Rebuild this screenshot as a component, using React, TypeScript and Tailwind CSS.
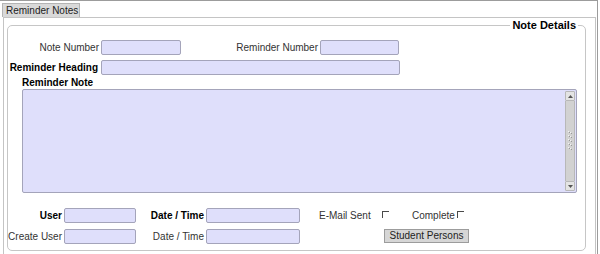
const inputCls = "h-[15px] shrink-0 rounded-[2px] border border-[#a4a4ba] bg-[#dfdffb]";

function Check() {
  return <span className="ml-0 mt-[1px] block h-[7px] w-[7px] border-l border-t border-[#4a4a4a]" />;
}

function ScrollBar() {
  return (
    <div className="my-[1px] mr-[1px] flex w-[10px] flex-col">
      <div className="flex h-[10px] items-center justify-center rounded-[1px] border border-[#b8b8b8] bg-[#e4e4e4]">
        <svg width="5" height="3" viewBox="0 0 5 3">
          <path d="M0 3 L2.5 0 L5 3 Z" fill="#555" />
        </svg>
      </div>
      <div className="flex flex-1 items-center justify-center border-x border-[#b8b8b8] bg-[#d2d2d2]">
        <svg width="6" height="22" viewBox="0 0 6 22">
          {[0, 4, 8, 12, 16].map((y) => (
            <g key={y}>
              <rect x="1" y={y + 1} width="1" height="1" fill="#f4f4f4" />
              <rect x="3" y={y + 2} width="1" height="1" fill="#f4f4f4" />
              <rect x="4" y={y + 3} width="1" height="1" fill="#999" />
              <rect x="2" y={y + 2} width="1" height="1" fill="#999" />
            </g>
          ))}
        </svg>
      </div>
      <div className="flex h-[10px] items-center justify-center rounded-[1px] border border-[#b8b8b8] bg-[#e4e4e4]">
        <svg width="5" height="3" viewBox="0 0 5 3">
          <path d="M0 0 L2.5 3 L5 0 Z" fill="#555" />
        </svg>
      </div>
    </div>
  );
}

export default function App() {
  return (
    <div className="h-[254px] w-[600px] overflow-hidden bg-white font-['Liberation_Sans',Arial,sans-serif] text-[10px] leading-[12px] text-[#333]">
      <div className="flex h-full w-[598px] flex-col border-r border-t border-[#9c9c9c]">
        {/* Tab */}
        <div className="pl-[2px] pt-[2px]">
          <div className="flex h-[14px] w-[78px] items-center border-x border-t border-[#b4b4b4] bg-[#d9d9d9] pl-[3px] text-[#222]">
            Reminder Notes
          </div>
        </div>

        {/* Panel */}
        <div className="ml-[3px] mr-[1px] flex-1 border-x border-t border-[#c4c4c4]">
          <div className="relative ml-[3px] mt-[7px] h-[226px] w-[579px] rounded-[5px] border border-[#c6c6c6]">
            <span className="absolute right-[7px] top-[-7px] bg-white px-[2px] text-[11px] font-bold leading-[12px] text-black">
              Note Details
            </span>

            <div className="mt-[14px] flex h-[15px] items-center">
              <span className="w-[93px] shrink-0 pr-[2px] text-right">Note Number</span>
              <span className={`${inputCls} w-[80px]`} />
              <span className="w-[139px] shrink-0 pr-[2px] text-right">Reminder Number</span>
              <span className={`${inputCls} w-[79px]`} />
            </div>

            <div className="mt-[5px] flex h-[15px] items-center">
              <span className="w-[93px] shrink-0 pr-[3px] text-right font-bold text-black">Reminder Heading</span>
              <span className={`${inputCls} w-[299px]`} />
            </div>

            <div className="ml-[14px] mt-[2px] h-[12px] font-bold text-black">Reminder Note</div>

            <div className="ml-[14px] flex h-[104px] w-[555px] rounded-[2px] border border-[#a4a4ba] bg-[#dfdffb]">
              <div className="flex-1" />
              <ScrollBar />
            </div>

            <div className="mt-[15px] flex h-[15px] items-center">
              <span className="w-[56px] shrink-0 pr-[2px] text-right font-bold text-black">User</span>
              <span className={`${inputCls} w-[72px]`} />
              <span className="w-[70px] shrink-0 pr-[2px] text-right font-bold text-black">Date / Time</span>
              <span className={`${inputCls} w-[94px]`} />
              <span className="ml-[19px] w-[63px] shrink-0">E-Mail Sent</span>
              <span className="self-start pt-[2px]">
                <Check />
              </span>
              <span className="ml-[23px] w-[45px] shrink-0">Complete</span>
              <span className="self-start pt-[2px]">
                <Check />
              </span>
            </div>

            <div className="mt-[6px] flex h-[15px] items-center">
              <span className="w-[56px] shrink-0 pr-[2px] text-right">Create User</span>
              <span className={`${inputCls} w-[72px]`} />
              <span className="w-[70px] shrink-0 pr-[2px] text-right">Date / Time</span>
              <span className={`${inputCls} w-[94px]`} />
              <button
                type="button"
                className="ml-[84px] -mt-[2px] flex h-[14px] w-[85px] items-center justify-center border border-[#9c9c9c] bg-[#d6d6d6] text-[10px] leading-[12px] text-[#222]"
              >
                Student Persons
              </button>
            </div>
          </div>
        </div>
      </div>
    </div>
  );
}
